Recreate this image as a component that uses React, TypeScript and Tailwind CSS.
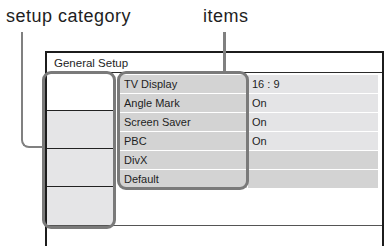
import React from 'react'

const rows = [
  { item: 'TV Display', value: '16 : 9' },
  { item: 'Angle Mark', value: 'On' },
  { item: 'Screen Saver', value: 'On' },
  { item: 'PBC', value: 'On' },
  { item: 'DivX', value: '' },
  { item: 'Default', value: '' },
]

export default function App() {
  return (
    <div className="relative w-[387px] h-[246px] overflow-hidden bg-white text-[#1e1e1e] font-['Liberation_Sans',Arial,sans-serif]">
      {/* labels */}
      <div className="grid grid-cols-[197px_auto] h-[51px] pl-[6px] pt-[7px] text-[18px] leading-[18px] tracking-[0.5px]">
        <span>setup category</span>
        <span>items</span>
      </div>

      {/* menu frame */}
      <div className="ml-[45px] w-[339px] h-[195px] border-l-2 border-t-2 border-r-2 border-[#1c1c1c] flex flex-col">
        <div className="h-[20px] border-b-[1.5px] border-[#2a2a2a] pl-[7px] pt-[1px] text-[11.5px] leading-[18px]">
          General Setup
        </div>

        <div className="flex h-[152px]">
          <div className="w-[68px] flex flex-col">
            <div className="h-[38px] bg-white border-b border-[#222]" />
            <div className="h-[38px] bg-[#e5e5e7] border-b border-[#222]" />
            <div className="h-[38px] bg-[#e5e5e7] border-b border-[#222]" />
            <div className="h-[38px] bg-[#e5e5e7]" />
          </div>
          <div className="flex-1 pl-[5px] pr-[4px] pt-[2px]">
            <div className="grid grid-cols-[127px_1fr] gap-x-[1px] gap-y-[1.5px] text-[11px] leading-[17.5px]">
              {rows.map((r, i) => (
                <React.Fragment key={r.item}>
                  <div className="h-[17.5px] bg-[#d3d3d3] pl-[4px] pt-[1px]">{r.item}</div>
                  <div
                    className={
                      i < 4
                        ? 'h-[17.5px] bg-[#e4e4e6] pl-[4px] pt-[1px]'
                        : 'h-[17.5px] bg-[#d3d3d3] pl-[4px] pt-[1px]'
                    }
                  >
                    {r.value}
                  </div>
                </React.Fragment>
              ))}
            </div>
          </div>
        </div>

        <div className="flex-1 border-t border-[#555]" />
      </div>

      {/* callout outlines and leader lines */}
      <div className="absolute left-[42px] top-[70.5px] w-[74px] h-[158.5px] border-[3px] border-[#7a7a7a] rounded-[9px]" />
      <div className="absolute left-[117px] top-[71px] w-[132px] h-[119px] border-[3px] border-[#7a7a7a] rounded-[9px]" />
      <div className="absolute left-[223px] top-[32px] w-[2.5px] h-[39px] bg-[#808080]" />
      <div className="absolute left-[21px] top-[32px] w-[22px] h-[116px] border-l-[2.5px] border-b-[2.5px] border-[#808080] rounded-bl-[8px]" />
    </div>
  )
}
